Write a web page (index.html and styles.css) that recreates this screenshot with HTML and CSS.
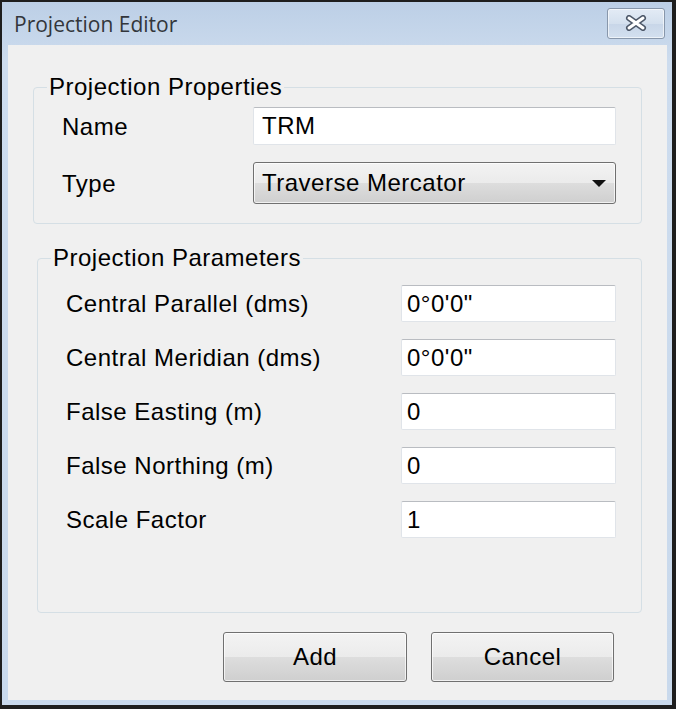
FILE: index.html
```html
<html>
    <head>
        <link rel="stylesheet" href="styles.css">
    </head>
    <body>
        <div class="window">
            <div class="titlebar">
                <span class="title">Projection Editor</span>
                <div class="close">
                    <svg width="26" height="16" viewBox="0 0 26 16">
                        <path d="M6 3 L20 13 M20 3 L6 13" stroke="#4d5869" stroke-width="6" stroke-linecap="round" fill="none"/>
                        <path d="M6 3 L20 13 M20 3 L6 13" stroke="#ffffff" stroke-width="3" stroke-linecap="round" fill="none"/>
                    </svg>
                </div>
            </div>

            <div class="client">
                <fieldset class="group group-props">
                    <legend>Projection Properties</legend>
                    <div class="rows rows-props">
                        <label for="name">Name</label>
                        <input type="text" id="name" class="field field-name" value="TRM">
                        <label>Type</label>
                        <div class="combo">
                            <span>Traverse Mercator</span>
                            <svg width="14" height="8" viewBox="0 0 14 8"><path d="M0 0 H14 L7 7 Z" fill="#111"/></svg>
                        </div>
                    </div>
                </fieldset>

                <fieldset class="group group-params">
                    <legend>Projection Parameters</legend>
                    <div class="rows rows-params">
                        <label for="parallel">Central Parallel (dms)</label>
                        <input type="text" id="parallel" class="field" value="0°0'0&quot;">
                        <label for="meridian">Central Meridian (dms)</label>
                        <input type="text" id="meridian" class="field" value="0°0'0&quot;">
                        <label for="easting">False Easting (m)</label>
                        <input type="text" id="easting" class="field" value="0">
                        <label for="northing">False Northing (m)</label>
                        <input type="text" id="northing" class="field" value="0">
                        <label for="scale">Scale Factor</label>
                        <input type="text" id="scale" class="field" value="1">
                    </div>
                </fieldset>

                <div class="buttons">
                    <button class="btn btn-add">Add</button>
                    <button class="btn btn-cancel">Cancel</button>
                </div>
            </div>
        </div>
    </body>
</html>
```

FILE: styles.css
```css
body
{
    margin: 0;
    background: #1e1e1e;
    font-family: "Liberation Sans", Arial, sans-serif;
    color: #000;
}

.window
{
    margin: 2px 0 0 2px;
    width: 670px;
    height: 703px;
    display: flex;
    flex-direction: column;
    background: linear-gradient(#bccfe6, #cddcee 60px, #c9d9ec);
}

.titlebar
{
    height: 43px;
    flex: 0 0 43px;
    display: flex;
    align-items: center;
    justify-content: space-between;
    padding: 0 7px 0 12px;
}

.title
{
    font-family: "Open Sans", sans-serif;
    font-size: 21px;
    color: #33363b;
    margin-top: 1px;
}

.close
{
    width: 56px;
    height: 29px;
    margin-top: -1px;
    border: 1px solid #8897ab;
    border-radius: 3px;
    background: linear-gradient(#e3ebf5, #d4e0ee 50%, #c8d6e8 51%, #d3e0ef);
    box-shadow: inset 0 0 0 1px rgba(255,255,255,0.6);
    display: flex;
    align-items: center;
    justify-content: center;
}

.client
{
    flex: 1;
    margin: 0 5px 5px 6px;
    background: #f0f0f0;
}

.group
{
    border: 1px solid #d5dfe5;
    border-radius: 4px;
    padding: 0;
    min-width: 0;
}

.group legend
{
    font-size: 24px;
    letter-spacing: 0.5px;
    line-height: 28px;
    margin-left: 13px;
    padding: 0 2px;
}

.group-props
{
    margin: 28px 25px 0 25px;
}

.group-params
{
    margin: 20px 25px 0 29px;
}

.rows
{
    display: grid;
    align-items: center;
    row-gap: 17px;
    font-size: 24px;
    letter-spacing: 0.5px;
}

.rows label
{
    padding-top: 1px;
}

.rows-props
{
    grid-template-columns: 191px minmax(0, 1fr);
    grid-template-rows: 38px 42px;
    padding: 6px 25px 19px 28px;
}

.rows-params
{
    grid-template-columns: 335px minmax(0, 1fr);
    grid-auto-rows: 37px;
    padding: 13px 25px 74px 28px;
}

.field
{
    width: 100%;
    height: 100%;
    box-sizing: border-box;
    font: inherit;
    letter-spacing: inherit;
    color: #000;
    background: #fff;
    border: 1px solid #e0e4e9;
    border-top-color: #b9bcc1;
    border-radius: 2px;
    padding: 0 5px;
    outline: none;
}

.field-name
{
    padding-left: 8px;
}

.combo
{
    height: 100%;
    box-sizing: border-box;
    display: flex;
    align-items: center;
    justify-content: space-between;
    padding: 0 9px 0 8px;
    border: 1px solid #707070;
    border-radius: 3px;
    background: linear-gradient(#f3f3f3, #ebebeb 50%, #dddddd 51%, #cfcfcf);
    box-shadow: inset 0 0 0 1px rgba(255,255,255,0.7);
}

.combo svg
{
    margin-top: 2px;
}

.buttons
{
    display: flex;
    justify-content: flex-end;
    gap: 24px;
    margin-top: 19px;
    padding-right: 53px;
}

.btn
{
    height: 50px;
    font-family: "Liberation Sans", Arial, sans-serif;
    font-size: 24px;
    letter-spacing: 0.5px;
    color: #000;
    border: 1px solid #707070;
    border-radius: 3px;
    background: linear-gradient(#f3f3f3, #ebebeb 50%, #dddddd 51%, #cfcfcf);
    box-shadow: inset 0 0 0 1px rgba(255,255,255,0.7);
    padding: 0;
}

.btn-add
{
    width: 184px;
}

.btn-cancel
{
    width: 183px;
}
```
